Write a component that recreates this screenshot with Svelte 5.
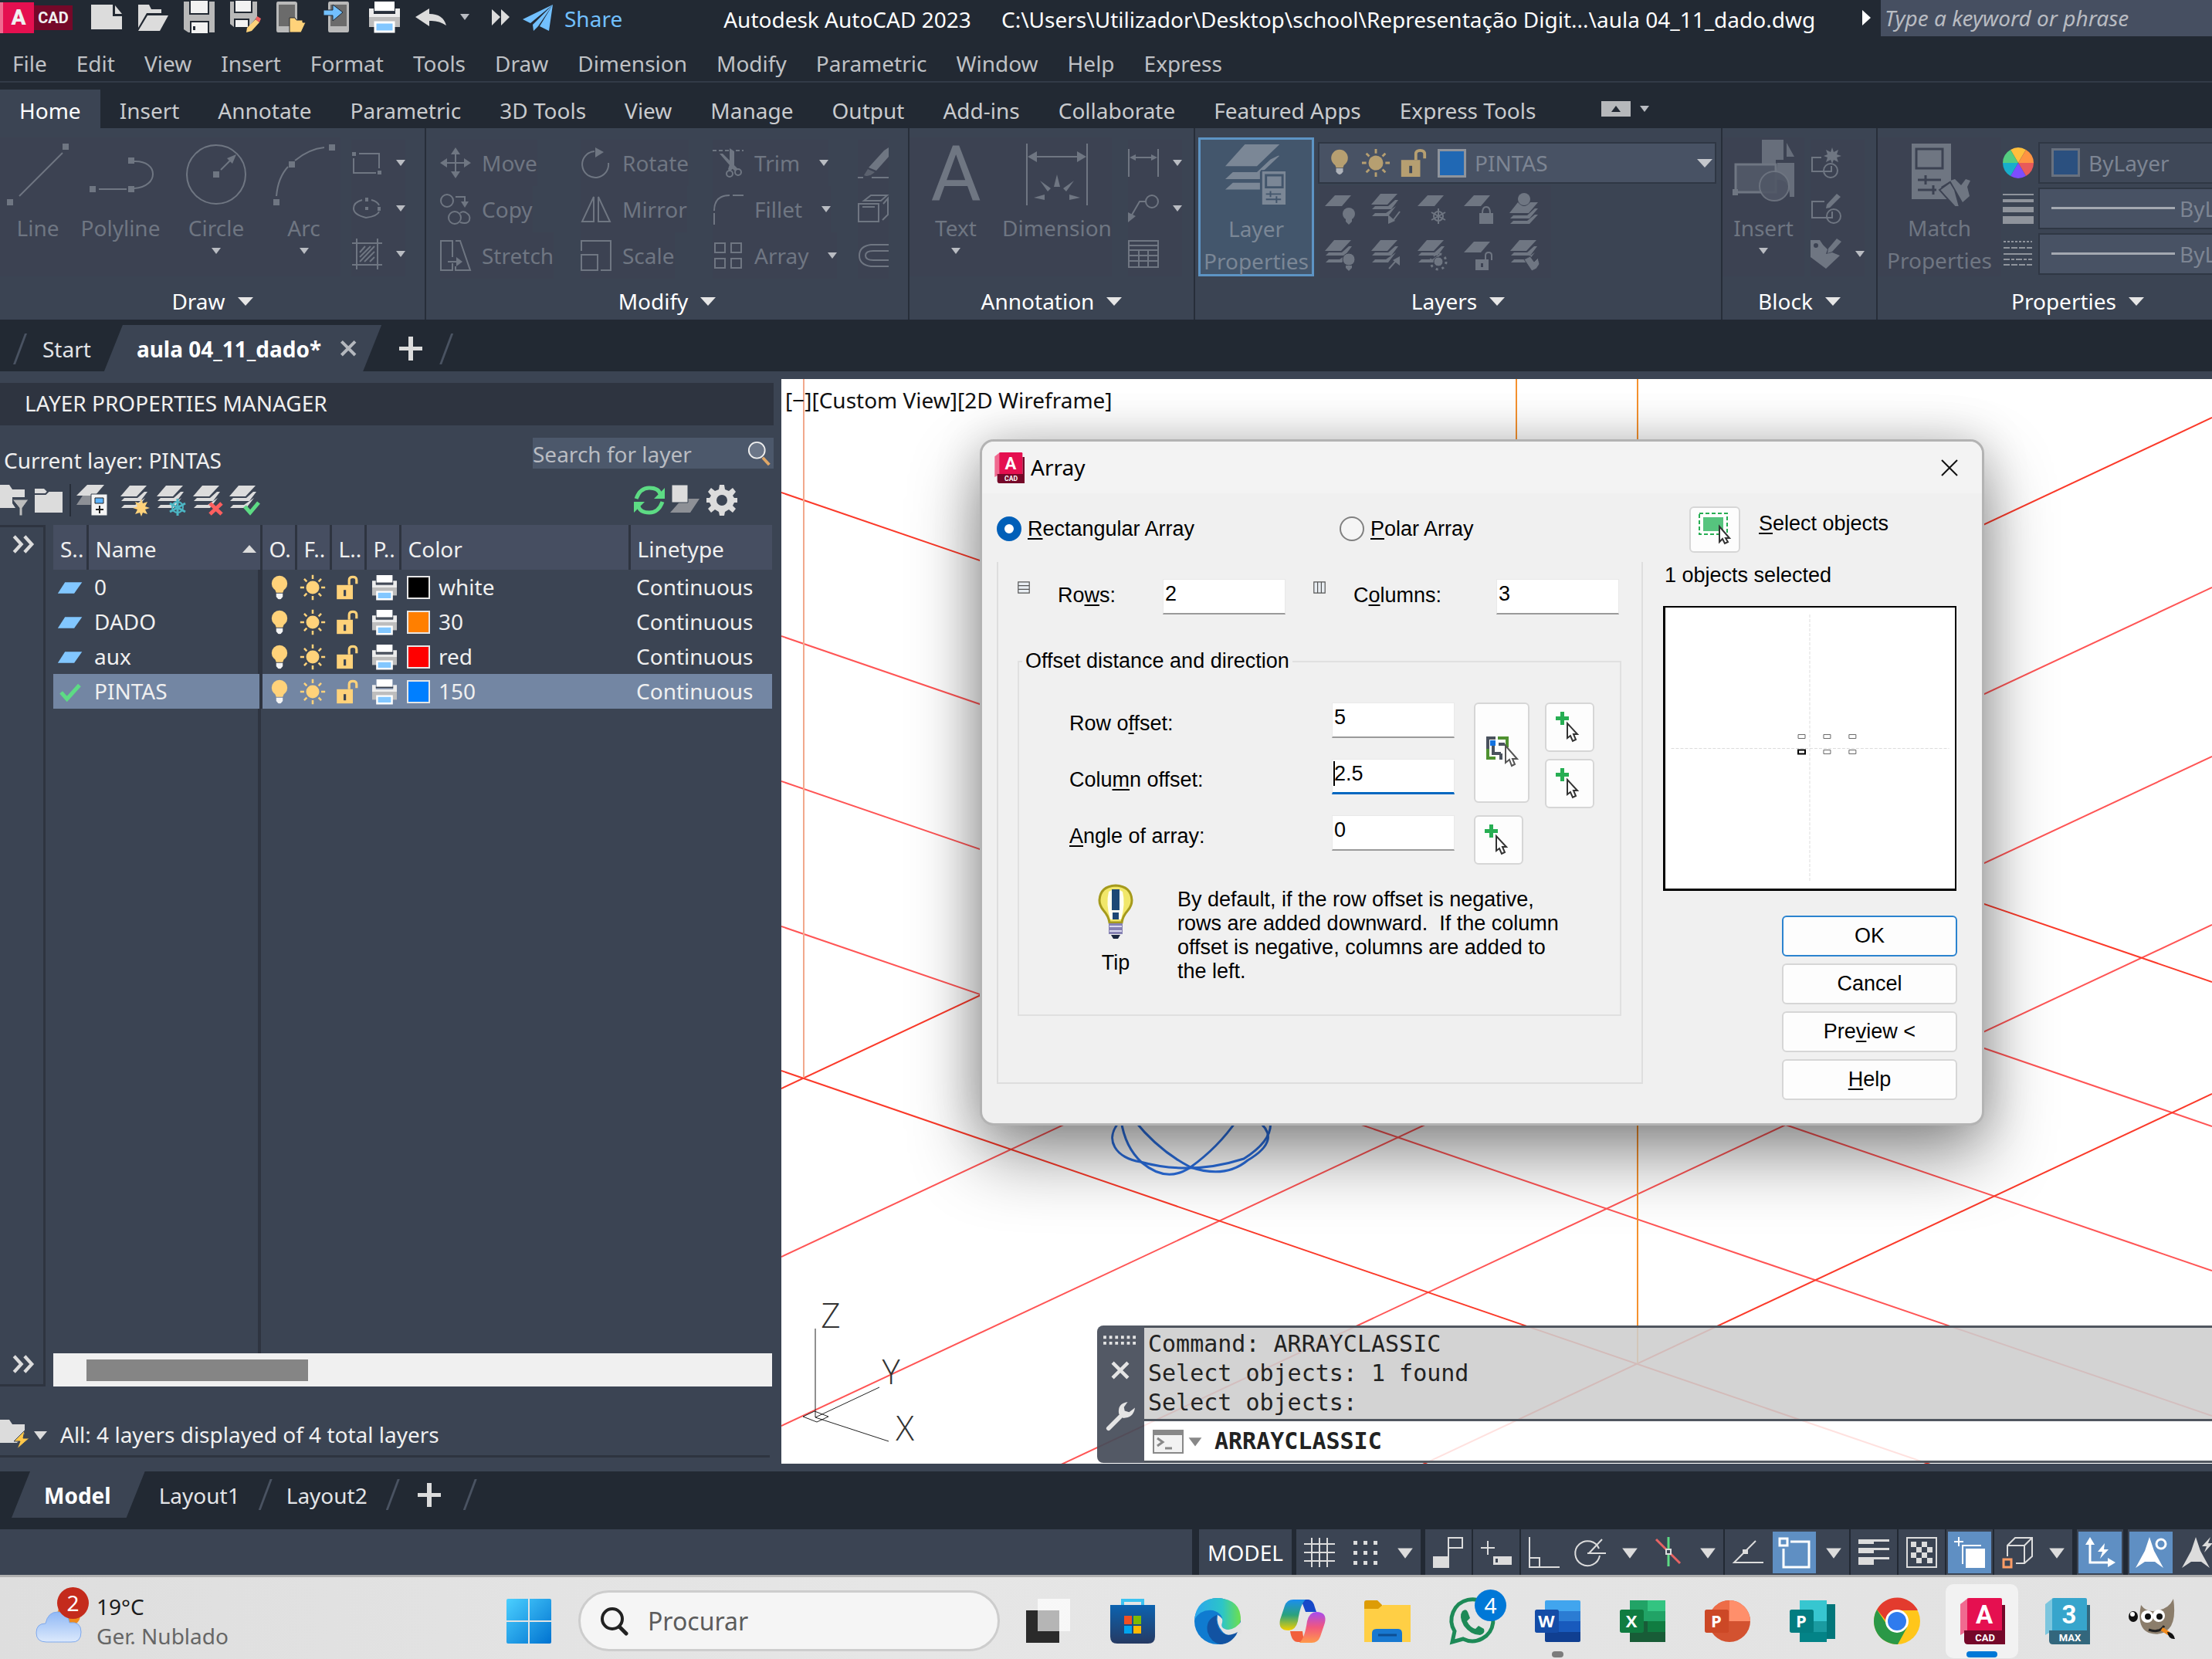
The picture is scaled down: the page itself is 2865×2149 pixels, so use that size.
<script lang="ts">
  // shared stroke settings for the line icons
  const S = 'fill="none" stroke="currentColor" stroke-width="2"';
  const smallStack =
    '<path fill="currentColor" d="M14 1H36L23 15H2zM33 9H37L28 21H3L7 17H24zM34 17L24 30H3L7 26H21z"/>';
  const sheet = '<path fill="currentColor" d="M15 3H36L24 17H2z"/>';

  const icons: Record<string, string> = {
    // quick access
    newFile: '<path fill="#dcdcdc" d="M0 4H28V19H40V36H0z"/><path fill="#dcdcdc" d="M31 5L40 16H31z"/>',
    open: '<path fill="#dcdcdc" d="M1 4H15L18 10H31V15H12L1 34z"/><path fill="#dcdcdc" d="M13 18H40L29 38H1z"/>',
    save: '<path fill="#b9b9b9" d="M0 0H40V40H6L0 36z"/><path fill="#f2f2f2" stroke="#222933" stroke-width="2" d="M8 -2H32V16H8zM9 26H32V42H9z"/><path fill="#222933" d="M12 32H15V37H12z"/>',
    saveAs: '<path fill="#b9b9b9" d="M0 0H35V20L24 33H5L0 29z"/><path fill="#f2f2f2" stroke="#222933" stroke-width="2" d="M6 -2H28V14H6zM6 23H24V34H6z"/><path fill="#ffd27a" d="M33 23L38 27L28 38L21 40L22 34z"/><path fill="#f26161" d="M35 19L40 22L38 27L33 23z"/>',
    openWeb: '<path fill="#b9b9b9" d="M2 0H24Q27 0 27 3V37Q27 40 24 40H2Q0 40 0 37V3Q0 0 2 0z"/><path fill="#6b6b6b" d="M3 4H24V32H3z"/><path fill="#ffd27a" stroke="#222933" d="M17 21H24L26 24H34V27H38L32 40H17z"/>',
    saveWeb: '<path fill="#b9b9b9" d="M9 0H32Q34 0 34 3V37Q34 40 32 40H9Q7 40 7 37V3Q7 0 9 0z"/><path fill="#6b6b6b" d="M10 4H31V32H10z"/><path fill="#72c0ff" stroke="#222933" d="M1 11H13V4L26 14L13 25V18H1z"/>',
    print: '<path fill="#fff" d="M7 0H33V14H7z"/><path fill="#ececec" d="M0 9H6V16H34V9H40V20H0z"/><path fill="#bdbdbd" d="M0 20H40V33H0z"/><path fill="#82c7ff" stroke="#fff" stroke-width="3" d="M8 27H32V39H8z"/><path stroke="#333b48" stroke-width="2" d="M6 13H34"/>',
    undo: '<path fill="#dcdcdc" d="M0 20L18 9V16Q36 16 40 31Q30 24 18 25V32z"/>',
    more: '<path fill="#dcdcdc" d="M0 10L11 20L0 31zM12 10L23 20L12 31z"/>',
    share: '<path fill="#72c0ff" d="M39 2L0 21L10 26zM39 2L13 28L14 36L20 30zM39 2L22 30L34 36z"/>',

    // draw panel
    line: `<path ${S} d="M16 68L72 12"/><path fill="currentColor" d="M0 72H8V80H0zM72 0H80V8H72z"/>`,
    polyline: `<path ${S} d="M12 59H48M58 58C90 56 90 22 58 23"/><path fill="currentColor" d="M0 55H8V63H0zM50 55H58V63H50zM50 18H58V26H50z"/>`,
    circle: `<circle cx="40" cy="40" r="38" ${S}/><path ${S} d="M46 34L60 20"/><path fill="currentColor" d="M66 14L54 19L61 26zM36 36H44V44H36z"/>`,
    arc: `<path ${S} d="M4 68Q6 44 19 30M28 22Q46 7 66 5"/><path fill="currentColor" d="M0 72H8V80H0zM20 23H28V31H20zM72 1H80V9H72z"/>`,
    rect: `<path ${S} d="M3 14V33H32M10 8H36V27"/><path fill="currentColor" d="M1 6H6V11H1zM34 30H39V35H34z"/>`,
    ellipse: `<path ${S} d="M14 9Q3 12 3 20T19 32Q34 30 36 24M26 9Q34 11 36 16"/><path fill="currentColor" d="M18 6H22V11H18zM18 18H22V22H18zM34 18H38V23H34z"/>`,
    hatch: `<path ${S} d="M7 0V40M34 0V40M1 6H40M1 34H40"/><path ${S} d="M11 18L18 10M11 24L25 10M11 30L30 10M17 30L30 17M24 30L30 24"/>`,

    // modify panel
    move: `<path ${S} d="M20 6V34M6 20H34"/><path fill="currentColor" d="M20 0L26 9H14zM20 40L26 31H14zM0 20L9 14V26zM40 20L31 14V26z"/>`,
    rotate: `<path ${S} d="M18 5A17 17 0 1 0 36 20"/><path fill="currentColor" d="M19 0L30 6L19 13z"/>`,
    trim: `<path ${S} stroke-dasharray="5 3" d="M0 4H22M30 4H40"/><path fill="currentColor" d="M22 1L28 5V26L22 31L20 28L22 22zM9 8L13 8L33 28L28 30z"/><circle cx="22" cy="34" r="4" ${S}/><circle cx="33" cy="32" r="4" ${S}/>`,
    erase: '<path fill="currentColor" d="M34 4L40 0V12L24 30L14 26z"/><path fill="currentColor" opacity=".6" d="M13 28L22 32Q14 39 8 36z"/><path fill="currentColor" d="M0 38H7V40H0zM18 38H40V40H18z"/>',
    copy: `<circle cx="9" cy="9" r="8" ${S}/><circle cx="19" cy="31" r="8" ${S}/><path ${S} d="M20 4H32V12M26 25Q29 22 33 24Q40 28 38 34T26 37"/><path fill="currentColor" d="M27 10H37L32 18z"/>`,
    mirror: `<path ${S} d="M17 4V36H2zM23 4V36H38z"/>`,
    fillet: `<path ${S} d="M2 40V25M2 22Q2 2 22 2M26 2H40"/>`,
    explode: `<path ${S} d="M1 13V36H27V13zM6 17H22M8 9L17 2H38L30 9zM33 13L39 6V27L32 34"/>`,
    stretch: `<path ${S} d="M16 30V39H1V1H16V22M20 1H26L39 39H20V34M10 28H24"/><path fill="currentColor" d="M21 22L29 28L21 34z"/>`,
    scale: `<path ${S} d="M1 14V1H39V39H26M1 19H22V39H1z"/>`,
    array: `<path ${S} d="M3 4H16V16H3zM24 4H37V16H24zM3 24H16V36H3zM24 24H37V36H24z"/>`,
    offset: `<path ${S} d="M40 6H17Q2 8 2 20T17 34H40M40 14H20Q10 14 10 20T20 26H40"/>`,

    // annotation panel
    dimension: `<path ${S} d="M1 0V80M79 0V80M10 17H70"/><path fill="currentColor" d="M2 17L14 10V24zM78 17L66 10V24zM36 56L40 40L44 56zM18 48L32 58L28 62zM62 48L48 58L52 62zM10 70L24 66V73zM70 70L56 66V73z"/>`,
    linear: `<path ${S} d="M1 2V38M39 2V38M6 13H34"/><path fill="currentColor" d="M2 13L10 9V17zM38 13L30 9V17z"/>`,
    leader: `<circle cx="31" cy="11" r="8" ${S}/><path ${S} d="M23 11H15L4 30"/><path fill="currentColor" d="M0 38V25L10 30z"/>`,
    table: `<path ${S} d="M1 3H39V37H1zM1 9H39M1 15H39M1 22H39M1 29H39M14 15V37M26 15V37"/>`,

    // layers panel
    layerProps: '<path fill="currentColor" d="M26 0H72L42 29H0zM70 15H72L50 36H46V46H0L10 37H42L60 20zM0 60L10 51H46V60z"/><path fill="currentColor" stroke="#43566c" stroke-width="2" d="M48 35H81V81H48z"/><path fill="none" stroke="#43566c" stroke-width="3" d="M54 41H76V57H54z"/><path fill="none" stroke="#43566c" stroke-width="2" d="M54 66H74M54 73H74M60 62V70M68 69V78"/>',
    bulb: '<circle cx="20" cy="14" r="12" fill="#ffd27a"/><path fill="#ffd27a" d="M12 20H28L25 28H15z"/><path fill="#f4f4f4" d="M15 29H25V34Q20 42 15 34z"/>',
    sun: '<circle cx="20" cy="20" r="10" fill="#ffd27a"/><path stroke="#ffd27a" stroke-width="3" d="M20 1V7M20 33V39M1 20H7M33 20H39M7 7L11 11M29 29L33 33M7 33L11 29M29 11L33 7"/>',
    lock: '<path fill="#ffd27a" d="M4 16H30V39H4z"/><path fill="none" stroke="#ffd27a" stroke-width="4" d="M24 16V8Q24 3 30 3T36 8V14"/><path fill="#3b4453" d="M15 24H19V34H15z"/>',
    layOff: sheet + '<circle cx="33" cy="27" r="8" fill="currentColor"/><path fill="currentColor" d="M29 33H37V37L33 41L29 37z"/>',
    layIso: smallStack + `<path ${S} d="M39 24L30 36"/><path fill="currentColor" d="M24 40V28L33 36z"/>`,
    layFreeze: sheet + `<path ${S} d="M29 20V40M20 25L38 35M20 35L38 25"/><circle cx="29" cy="30" r="6" ${S}/>`,
    layLock: sheet + `<path fill="currentColor" d="M22 26H40V40H22z"/><path ${S} d="M26 26Q26 18 31 18T36 26"/>`,
    layCurrent: '<path fill="currentColor" d="M12 12Q20 22 28 12H38L26 26H1zM34 20H38L27 33H2L6 29H24zM34 28H38L27 40H2L6 36H24z"/><circle cx="20" cy="8" r="8" fill="currentColor"/>',
    layOn: smallStack + '<circle cx="33" cy="26" r="8" fill="currentColor" stroke="#3c4252"/><path fill="currentColor" d="M29 34H37V37L33 41L29 37z"/>',
    layUniso: smallStack + `<path ${S} d="M25 38L34 28"/><path fill="currentColor" d="M39 22V34L30 27z"/>`,
    layThaw: smallStack + '<circle cx="29" cy="29" r="6" fill="currentColor" stroke="#3c4252"/><circle cx="29" cy="29" r="10" fill="none" stroke="currentColor" stroke-width="3" stroke-dasharray="3 5"/>',
    layUnlock: sheet + `<path fill="currentColor" d="M17 26H34V40H17z"/><path ${S} d="M30 26V21Q30 17 34 17T38 21V27"/><path fill="#3c4252" d="M24 31H27V36H24z"/>`,
    layMatch: smallStack + '<path fill="currentColor" stroke="#3c4252" d="M20 26L28 22L33 29L38 24L40 32L36 38L30 41z"/>',

    // block and properties
    insert: '<g transform="translate(0 -5)"><path fill="currentColor" d="M38 0H66V26H56V46H38zM70 4L80 22H70zM58 30H80V74H74Q74 50 56 52z" opacity=".85"/><path fill="#505766" stroke="currentColor" stroke-width="3" d="M4 32H56V68H4z"/><circle cx="54" cy="60" r="19" fill="#505766" opacity=".9" stroke="currentColor" stroke-width="2"/><path fill="currentColor" d="M0 64H7V72H0z"/></g>',
    blockNew: `<path ${S} d="M14 13H2V31H27V24"/><circle cx="26" cy="30" r="9" ${S}/><path fill="currentColor" d="M28 0L30 6L36 3L34 9L40 11L34 13L36 19L30 16L28 21L26 16L20 19L22 13L17 11L22 9L20 3L26 6z"/>`,
    blockEdit: `<path ${S} d="M18 11H2V32H28V24"/><circle cx="30" cy="30" r="9" ${S}/><path fill="currentColor" d="M34 1L39 5L25 19L20 20L21 15z"/>`,
    attrEdit: '<path fill="currentColor" d="M0 2H12L16 8L22 14L20 20L28 18L38 22L20 39L0 24z"/><circle cx="7" cy="9" r="3" fill="#3c4252"/><path fill="currentColor" d="M34 0L40 4L28 17L22 19L23 13z"/>',
    match: '<path fill="currentColor" d="M4 0H55V48L42 56L54 72H4z"/><path fill="none" stroke="#3c4252" stroke-width="3" d="M10 7H44V32H10z"/><path stroke="#3c4252" stroke-width="3" d="M12 47H42M12 60H36M22 41V53M32 54V66"/><path fill="currentColor" stroke="#3c4252" stroke-width="2" d="M40 60L54 50L60 60L66 82L60 82z"/><path fill="currentColor" d="M54 48L60 46L68 54L74 46L80 48L76 56L79 68L70 76z"/>',
    wheel: '<path fill="#ffbf3c" d="M20 20L10 3A20 20 0 0 1 30 3z"/><path fill="#ff9442" d="M20 20L30 3A20 20 0 0 1 40 20z"/><path fill="#e85a5a" d="M20 20H40A20 20 0 0 1 30 37z"/><path fill="#7d4dff" d="M20 20L30 37A20 20 0 0 1 10 37z"/><path fill="#18aecb" d="M20 20L10 37A20 20 0 0 1 0 20z"/><path fill="#54cd80" d="M20 20H0A20 20 0 0 1 10 3z"/>',
    weights: '<path fill="#8f949c" d="M0 1H40V3H0zM0 8H40V12H0zM0 18H40V25H0zM0 30H40V40H0z"/>',
    types: '<path stroke="#8f949c" stroke-width="2" stroke-dasharray="3 2" d="M1 4H38"/><path stroke="#8f949c" stroke-width="2" stroke-dasharray="8 2" d="M1 12H38M1 34H38"/><path stroke="#8f949c" stroke-width="2" d="M1 20H38"/><path stroke="#8f949c" stroke-width="2" stroke-dasharray="8 2 4 2" d="M1 27H38"/>',

    // layer palette
    folderFilter: '<path fill="#dcdcdc" d="M0 0H12L16 6H32V16H16V24L20 30H0z"/><path fill="#bdbdbd" stroke="#3b4453" d="M16 19H37L29 30V40H25V30z"/>',
    folder: '<path fill="#dcdcdc" d="M0 5H12L16 9H36V36H0z"/><path fill="none" stroke="#3b4453" stroke-width="2" d="M0 12H14L18 8"/>',
    layerNew: '<path fill="#8d9096" d="M8 14H20V26H0z"/><path fill="#dcdcdc" d="M14 0H36L24 14H0z"/><path fill="#f4f4f4" stroke="#3b4453" d="M19 12H40V40H19z"/><path fill="#5db4ff" stroke="#222" d="M24 17H35V24H24z"/><path stroke="#222" stroke-width="2" d="M25 32H35M30 27V37"/>',
    layerSun: smallStack + '<path fill="#ffd27a" d="M29 18L31 24L37 22L34 28L40 30L34 32L37 38L31 36L29 41L27 36L21 38L24 32L18 30L24 28L21 22L27 24z"/>',
    layerFreeze: smallStack + '<path fill="none" stroke="#4cb6c4" stroke-width="3" d="M29 18V40M19 24L39 35M19 35L39 24"/><circle cx="29" cy="29" r="7" fill="none" stroke="#4cb6c4" stroke-width="2"/>',
    layerDelete: smallStack + '<path stroke="#ff5f5f" stroke-width="5" d="M24 24L39 38M39 24L24 38"/>',
    layerCheck: smallStack + '<path fill="none" stroke="#5ddb84" stroke-width="5" d="M22 28L29 36L40 23"/>',
    refresh: '<path fill="none" stroke="#5ddb84" stroke-width="5" d="M3 18Q8 4 20 4T34 12M37 22Q32 36 20 36T6 28"/><path fill="#5ddb84" d="M40 4V18H26zM0 36V22H14z"/>',
    layerState: '<path fill="#8d9096" d="M16 18H38L26 36H0z"/><path fill="#dcdcdc" stroke="#3b4453" d="M2 0H23V23H2z"/>',
    gear: '<path fill="#dcdcdc" fill-rule="evenodd" d="M17 0H23L24 6L29 8L34 4L38 9L34 14L36 17H40V23H36L34 27L38 31L34 36L29 32L24 35L23 40H17L16 35L11 32L6 36L2 31L6 27L4 23H0V17H4L6 14L2 9L6 4L11 8L16 6zM20 13A7 7 0 1 0 20 27A7 7 0 1 0 20 13z"/>',
    para: '<path fill="#82c7ff" d="M12 12H38L26 29H1z"/>',
    tick: '<path fill="none" stroke="#5ddb84" stroke-width="6" d="M6 21L15 31L34 10"/>',
    chevrons: '<path fill="none" stroke="#dcdcdc" stroke-width="5" d="M5 8L16 20L5 32M21 8L32 20L21 32"/>',
    folderFlash: '<path fill="#dcdcdc" d="M0 0H12L16 6H32V18L22 30H0z"/><path fill="#ffc74a" stroke="#3b4453" d="M32 14L18 28H26L22 38L38 24H30z"/>',
    search: '<circle cx="13" cy="14" r="11" fill="#6b7688" stroke="#eee" stroke-width="2"/><path stroke="#e0a766" stroke-width="4" d="M21 24L30 34"/>',
    plus: '<path fill="#dcdcdc" d="M17 4H23V17H35V22H23V35H17V22H5V17H17z"/>',
    cross: '<path stroke="#b4b8be" stroke-width="5" d="M8 8L30 30M30 8L8 30"/>',

    // status bar
    gridOn: `<path ${S} d="M10 1V39M20 1V39M30 1V39M0 9H40M0 20H40M0 31H40"/>`,
    snap: '<path fill="currentColor" d="M4 5H9V10H4zM17 5H22V10H17zM30 5H35V10H30zM4 18H9V23H4zM17 18H22V23H17zM30 18H35V23H30zM4 31H9V36H4zM17 31H22V36H17zM30 31H35V36H30z"/>',
    infer: `<path fill="currentColor" d="M0 25H21V40H0z"/><path ${S} d="M20 26V1H38V14H20"/>`,
    dynInput: `<path ${S} d="M9 5V23M0 14H18"/><path fill="currentColor" d="M16 25H40V36H16z"/><path fill="#3b4453" d="M19 28H22V33H19z"/>`,
    ortho: `<path ${S} d="M1 0V39H40M1 27H14V39"/>`,
    polar: `<path ${S} d="M31 15A16 16 0 1 0 32 24M16 21H40M18 21L35 3"/>`,
    isodraft: '<path stroke="#5ddb84" stroke-width="3" d="M20 0V38"/><path stroke="#e86464" stroke-width="3" d="M4 3L35 34"/><path fill="#3b4453" stroke="#dcdcdc" stroke-width="2" d="M17 16H23V22H17z"/>',
    otrack: `<path ${S} d="M30 5L2 33H40"/><path fill="currentColor" d="M13 16H20V22H13z"/>`,
    osnap: '<path fill="none" stroke="currentColor" stroke-width="3" d="M1 2H11V11H1zM15 6H39V39H6V15"/>',
    weight: '<path fill="currentColor" d="M0 3H40V6H20V9H0zM0 14H40V17H20V21H0zM0 26H40V29H20V36H0z"/>',
    transp: `<path ${S} d="M1 1H39V39H1z"/><path fill="currentColor" d="M6 6H13V13H6zM20 6H27V13H20zM13 13H20V20H13zM27 13H34V20H27zM6 20H13V27H6zM20 20H27V27H20zM13 27H20V34H13zM27 27H34V34H27z"/>`,
    cycle: '<path fill="#fff" d="M15 15H40V40H15z"/><path fill="none" stroke="#fff" stroke-width="2" d="M11 35V11H35M6 0V12M0 6H12"/>',
    snap3d: `<path ${S} d="M7 25V11L17 1H39V25L29 34H18M7 11H29V34M29 11L39 1"/><path fill="none" stroke="#ff9d66" stroke-width="3" d="M2 29H12V39H2z"/>`,
    ucs: '<path fill="none" stroke="#fff" stroke-width="3" d="M7 8V33H33"/><path fill="#fff" d="M7 0L13 10H1zM40 33L30 27V39zM26 8L17 19H23L20 28L31 16H25z"/>',
    anno: '<path fill="currentColor" d="M18 0L24 18L36 40L25 32H12L0 40L12 18z"/><circle cx="33" cy="9" r="6" fill="none" stroke="currentColor" stroke-width="3"/>',
    annoAuto: '<path fill="currentColor" d="M18 0L24 18L36 40L25 32H12L0 40L12 18zM37 0L26 12H32L29 20L40 8H34z"/>',

    // dialog
    pick: '<path fill="#27ae53" d="M8 0H13V6H19V11H13V17H8V11H2V6H8z"/><path fill="#fff" stroke="#333" stroke-width="2" d="M17 15V34L21 31L24 38L28 36L25 29H30z"/>',
    pickBoth: '<path fill="none" stroke="#4a525e" stroke-width="4" d="M3 16V2H13M10 10V22H20"/><path fill="none" stroke="#4f9130" stroke-width="4" d="M16 2H28V14M3 16V28H13"/><path fill="#1372e0" d="M6 5H13V12H6z"/><path fill="#4a525e" d="M17 8H25V12H17zM18 22H22V30H18z"/><path fill="#fff" stroke="#555" stroke-width="2" d="M26 12V34L31 30L34 38L38 36L35 29H41z"/>',
    selectObj: '<path fill="#56c47e" d="M6 6H32V24H6z"/><path fill="none" stroke="#27ae53" stroke-width="2" stroke-dasharray="5 3" d="M1 1H37V28H1z"/><path fill="#fff" stroke="#333" stroke-width="2" d="M27 18V38L31 34L34 40L38 38L35 33H40z"/>',
    close: '<path stroke="#111" stroke-width="2" d="M10 10L30 30M30 10L10 30"/>',
    rows: '<path fill="#e9eef3" stroke="#555" stroke-width="3" d="M2 2H38V38H2zM2 14H38M2 26H38"/>',
    cols: '<path fill="#e9eef3" stroke="#555" stroke-width="3" d="M2 2H38V38H2zM14 2V38M26 2V38"/>',
    wrench: '<path fill="none" stroke="#e4e4e4" stroke-width="6" stroke-linecap="round" d="M4 36L24 16"/><path fill="#e4e4e4" d="M30 0Q16 2 18 16L24 22Q38 22 40 8L32 14L26 12L25 7z"/>',
    cmdClose: '<path stroke="#e4e4e4" stroke-width="5" d="M9 9L31 31M31 9L9 31"/>',
    grip: '<path fill="none" stroke="#e4e4e4" stroke-width="4" stroke-dasharray="4 4" d="M-2 16H44M-2 24H44"/>',
    prompt: '<path fill="#f2f2f2" stroke="#888" stroke-width="2" d="M1 6H39V35H1z"/><path fill="#888" d="M0 5H40V12H0z"/><path fill="none" stroke="#888" stroke-width="3" d="M6 16L13 21L6 26M16 29H25"/>',
    caret: '<path fill="currentColor" d="M6 12H34L20 31z"/>',

    // taskbar, 60 unit box
    windows: '<defs><linearGradient id="win" x2="1" y2="1"><stop stop-color="#4bd0ff"/><stop offset="1" stop-color="#0072d0"/></linearGradient></defs><path fill="url(#win)" d="M1 3Q1 1 3 1H29V29H1zM31 1H57Q59 1 59 3V29H31zM1 31H29V59H3Q1 59 1 57zM31 31H59V57Q59 59 57 59H31z"/>',
    weather: '<defs><linearGradient id="cl" x2="0" y2="1"><stop stop-color="#8fb8f5"/><stop offset="1" stop-color="#dce9fc"/></linearGradient></defs><circle cx="43" cy="22" r="15" fill="#f08b1d"/><path fill="url(#cl)" stroke="#7fa9ec" d="M14 57Q1 57 1 45T13 33Q16 18 29 18T44 32Q59 30 59 44T46 57z"/>',
    taskview: '<path fill="#2a2a2a" d="M2 16H45V58H2z"/><path fill="#fafafa" opacity=".85" d="M17 1H59V43H17z"/><path fill="#b5b5b5" d="M17 16H45V43H17z"/>',
    store: '<defs><linearGradient id="st" x2="0" y2="1"><stop stop-color="#0c63b0"/><stop offset="1" stop-color="#263a63"/></linearGradient></defs><path fill="none" stroke="#3cc3f2" stroke-width="4" d="M17 13V3H43V13"/><path fill="url(#st)" d="M1 9H59V50Q59 59 50 59H10Q1 59 1 50z"/><path fill="#f25022" d="M19 23H29V34H19z"/><path fill="#7fba00" d="M31 23H41V34H31z"/><path fill="#00a4ef" d="M19 36H29V46H19z"/><path fill="#ffb900" d="M31 36H41V46H31z"/>',
    edge: '<defs><linearGradient id="ed" x2="1"><stop stop-color="#2aa5ee"/><stop offset=".6" stop-color="#2cc5c8"/><stop offset="1" stop-color="#6ee04c"/></linearGradient></defs><circle cx="30" cy="30" r="30" fill="#0f7bd0"/><path fill="url(#ed)" d="M0 28Q3 0 31 0Q60 2 60 28Q58 41 44 41Q33 40 36 32Q38 20 24 16Q8 14 0 28z"/><path fill="#e3e3e3" d="M30 22Q38 26 36 32Q33 40 44 41Q54 40 61 30L61 46L54 47Q42 51 36 43Q28 34 30 22z"/><path fill="#1253a2" d="M29 22Q14 28 17 44Q21 57 33 60Q48 60 56 44Q42 52 34 43Q27 34 29 22z"/>',
    copilot: '<defs><linearGradient id="co" x2="0" y2="1"><stop stop-color="#1b8ef0"/><stop offset=".5" stop-color="#2aa27d"/><stop offset="1" stop-color="#f5d000"/></linearGradient><linearGradient id="cp" x2="0" y2="1"><stop stop-color="#a54cf0"/><stop offset=".5" stop-color="#f2577d"/><stop offset="1" stop-color="#ff9a4a"/></linearGradient></defs><path fill="#1648c8" d="M28 2H38Q44 3 46 12L48 18H34z"/><path fill="url(#co)" d="M18 2H34Q27 8 24 30Q21 42 12 42Q-2 42 1 28L7 10Q10 2 18 2z"/><path fill="#f2603c" d="M14 43H30L32 57H24Q16 57 14 43z"/><path fill="url(#cp)" d="M42 58H26Q33 52 36 30Q39 18 48 18Q62 18 59 32L53 50Q50 58 42 58z"/>',
    explorer: '<path fill="#dd9c06" d="M0 6Q0 3 3 3H17L23 9V16H0z"/><path fill="#ffcf45" d="M0 14H18L24 9H60V57H0z"/><path fill="#1878d0" d="M10 57V46Q10 40 16 40H44Q49 40 49 46V57z"/><path stroke="#0d4f94" stroke-width="3" d="M18 48H42"/>',
    whatsapp: '<path fill="none" stroke="#1d8a57" stroke-width="5" d="M4 57L7 43A27 27 0 1 1 18 53z"/><path fill="#1d8a57" d="M17 17Q22 13 24 18L27 26L23 30Q27 38 34 40L38 36L45 40Q47 46 40 48Q28 48 19 36Q12 24 17 17z"/>',
    chrome: '<circle cx="30" cy="30" r="30" fill="#ffc61a"/><path fill="#e33b2e" d="M4 15A30 30 0 0 1 57 16H30L18 32z"/><path fill="#2a9847" d="M4 15A30 30 0 0 0 31 60L43 38L18 36z"/><circle cx="30" cy="30" r="15" fill="#fff"/><circle cx="30" cy="30" r="12" fill="#2f7bee"/>',
    gimp: '<path fill="#8b7d6b" d="M16 9Q24 20 38 16Q52 14 58 1Q62 30 52 40Q42 50 26 45Q10 38 16 9z"/><ellipse cx="6" cy="24" rx="6" ry="7" fill="#111"/><circle cx="5" cy="21" r="3" fill="#fff"/><circle cx="24" cy="24" r="8" fill="#fff"/><circle cx="39" cy="23" r="8" fill="#fff"/><circle cx="25" cy="24" r="4" fill="#111"/><circle cx="40" cy="24" r="4" fill="#111"/><path fill="none" stroke="#222" stroke-width="3" d="M26 41Q40 46 46 36"/><path stroke="#f08a1d" stroke-width="5" d="M43 40L52 46"/><path fill="#111" d="M50 44Q58 44 60 53Q52 54 50 44z"/>'
  };

  const quick = ['newFile', 'open', 'save', 'saveAs', 'openWeb', 'saveWeb', 'print', 'undo'];
  const menus = ['File', 'Edit', 'View', 'Insert', 'Format', 'Tools', 'Draw', 'Dimension', 'Modify', 'Parametric', 'Window', 'Help', 'Express'];
  const ribbonTabs = ['Home', 'Insert', 'Annotate', 'Parametric', '3D Tools', 'View', 'Manage', 'Output', 'Add-ins', 'Collaborate', 'Featured Apps', 'Express Tools'];

  const modify = [
    [['move', 'Move'], ['copy', 'Copy'], ['stretch', 'Stretch']],
    [['rotate', 'Rotate'], ['mirror', 'Mirror'], ['scale', 'Scale']],
    [['trim', 'Trim', 'more'], ['fillet', 'Fillet', 'more'], ['array', 'Array', 'more']],
    [['erase', ''], ['explode', ''], ['offset', '']]
  ];

  const layerTools = [
    ['layOff', 'layIso', 'layFreeze', 'layLock', 'layCurrent'],
    ['layOn', 'layUniso', 'layThaw', 'layUnlock', 'layMatch']
  ];

  const layers = [
    { name: '0', swatch: '#000000', color: 'white' },
    { name: 'DADO', swatch: '#ff7f00', color: '30' },
    { name: 'aux', swatch: '#ff0000', color: 'red' },
    { name: 'PINTAS', swatch: '#007fff', color: '150' }
  ];

  // construction lines: x1, y1, x2, y2
  const guides = [
    [0, 333, 1853, 968], [0, 521, 1853, 1155], [0, 709, 1853, 1343],
    [0, 1137, 1853, 270], [0, 1356, 1853, 489], [0, 1576, 1853, 707]
  ];
  const edges = [
    [0, 147, 1853, 781], [0, 896, 1853, 1531], [0, 919, 1853, 50], [0, 1796, 1853, 926]
  ];

  const office = [
    { letter: 'W', name: 'Word', tones: ['#41a5ee', '#2b7cd3', '#185abd', '#103f91'], running: true },
    { letter: 'X', name: 'Excel', tones: ['#33c481', '#21a366', '#107c41', '#185c37'], running: false },
    { letter: 'P', name: 'PowerPoint', tones: ['#ff8f6b', '#ed6c47', '#d35230', '#c43e1c'], running: false },
    { letter: 'P', name: 'Publisher', tones: ['#37c6d0', '#1a9ba1', '#038387', '#02767a'], running: false }
  ];

  let currentLayer = 'PINTAS';
  let mode = 'rectangular';
  let rows = '2';
  let columns = '3';
  let rowOffset = '5';
  let columnOffset = '2.5';
  let angle = '0';
</script>

{#snippet icon(name: string, size = 40, box = 40)}
  <svg class="icon" width={size} height={size} viewBox="0 0 {box} {box}" aria-hidden="true">{@html icons[name]}</svg>
{/snippet}

{#snippet arrow()}
  <svg class="icon arrow" width="12" height="8" viewBox="0 0 12 8" aria-hidden="true"><path fill="currentColor" d="M0 0H12L6 8z" /></svg>
{/snippet}

{#snippet bigTool(name: string, label: string, more: boolean)}
  <button class="big" type="button">
    {@render icon(name, 80, 80)}
    <span>{label}</span>
    {#if more}{@render arrow()}{/if}
  </button>
{/snippet}

{#snippet smallTool(name: string, label: string, more: boolean)}
  <button class="small" type="button" aria-label={label || name}>
    {@render icon(name)}
    {#if label}<span>{label}</span>{/if}
    {#if more}{@render arrow()}{/if}
  </button>
{/snippet}

{#snippet panelTitle(label: string)}
  <button class="panel-title" type="button">
    {label}
    <svg width="20" height="11" viewBox="0 0 20 11" aria-hidden="true"><path fill="#e6e6e6" d="M0 0H20L10 11z" /></svg>
  </button>
{/snippet}

{#snippet cadLogo(size: number, top: string, side: string, bottom: string, letter: string, word: string)}
  <svg class="icon" width={size} height={size} viewBox="0 0 60 60" aria-hidden="true">
    <path fill={side} d="M2 8L12 0V42L2 48z" />
    <path fill={bottom} d="M56 9H60V60H12Q7 60 7 55V42H56z" />
    <path fill={top} d="M11 2Q11 0 13 0H54Q56 0 56 2V42H11z" />
    <text x="33" y="33" text-anchor="middle" font-family="Roboto, sans-serif" font-weight="700" font-size="33" fill="#fff">{letter}</text>
    <text x="34" y="56" text-anchor="middle" font-family="Roboto, sans-serif" font-weight="700" font-size="13" fill="#fff">{word}</text>
  </svg>
{/snippet}

<div class="screen">
  <header class="titlebar">
    <div class="brand"><b>A</b><span>CAD</span></div>
    <div class="quick">
      {#each quick as name}
        <button type="button" aria-label={name}>{@render icon(name)}</button>
      {/each}
    </div>
    <button class="undo-more" type="button" aria-label="Undo history">{@render arrow()}</button>
    <button class="chevron" type="button" aria-label="More tools">{@render icon('more')}</button>
    <button class="share" type="button">{@render icon('share')} Share</button>
    <h1 class="app-title">Autodesk AutoCAD 2023 <span>C:\Users\Utilizador\Desktop\school\Representação Digit...\aula 04_11_dado.dwg</span></h1>
    <div class="infocenter">
      <svg width="11" height="20" viewBox="0 0 11 20" aria-hidden="true"><path fill="#fff" d="M0 0L11 10L0 20z" /></svg>
      <input type="text" placeholder="Type a keyword or phrase" aria-label="Type a keyword or phrase" />
    </div>
  </header>

  <nav class="menubar">
    {#each menus as item}
      <button type="button">{item}</button>
    {/each}
  </nav>

  <nav class="ribbon-tabs">
    {#each ribbonTabs as tab, i}
      <button type="button" class:active={i === 0}>{tab}</button>
    {/each}
    <button class="minimize" type="button" aria-label="Minimize ribbon">
      <svg width="38" height="20" viewBox="0 0 38 20" aria-hidden="true"><path fill="#b6b8bb" d="M0 0H38V20H0z" /><path fill="#222933" d="M19 6L25 14H13z" /></svg>
      {@render arrow()}
    </button>
  </nav>

  <section class="ribbon">
    <div class="panel draw">
      <div class="tools">
        {@render bigTool('line', 'Line', false)}
        {@render bigTool('polyline', 'Polyline', false)}
        {@render bigTool('circle', 'Circle', true)}
        {@render bigTool('arc', 'Arc', true)}
        <div class="stack">
          {@render smallTool('rect', '', true)}
          {@render smallTool('ellipse', '', true)}
          {@render smallTool('hatch', '', true)}
        </div>
      </div>
      {@render panelTitle('Draw')}
    </div>

    <div class="panel modify">
      <div class="tools">
        {#each modify as column}
          <div class="stack">
            {#each column as [name, label, more]}
              {@render smallTool(name, label, !!more)}
            {/each}
          </div>
        {/each}
      </div>
      {@render panelTitle('Modify')}
    </div>

    <div class="panel annotation">
      <div class="tools">
        <button class="big" type="button">
          <span class="letter-a" aria-hidden="true">A</span>
          <span>Text</span>
          {@render arrow()}
        </button>
        {@render bigTool('dimension', 'Dimension', false)}
        <div class="stack">
          {@render smallTool('linear', '', true)}
          {@render smallTool('leader', '', true)}
          {@render smallTool('table', '', false)}
        </div>
      </div>
      {@render panelTitle('Annotation')}
    </div>

    <div class="panel layers">
      <div class="tools">
        <button class="big selected" type="button">
          {@render icon('layerProps', 80, 82)}
          <span>Layer Properties</span>
        </button>
        <div class="stack wide">
          <div class="combo">
            <span class="states">
              {@render icon('bulb', 36)}
              {@render icon('sun', 38)}
              {@render icon('lock', 38)}
            </span>
            <i class="swatch"></i>
            <select bind:value={currentLayer} aria-label="Current layer">
              {#each layers as layer}<option>{layer.name}</option>{/each}
            </select>
            <svg width="20" height="11" viewBox="0 0 20 11" aria-hidden="true"><path fill="#c4c7cc" d="M0 0H20L10 11z" /></svg>
          </div>
          {#each layerTools as line}
            <div class="line">
              {#each line as name}{@render smallTool(name, '', false)}{/each}
            </div>
          {/each}
        </div>
      </div>
      {@render panelTitle('Layers')}
    </div>

    <div class="panel block">
      <div class="tools">
        {@render bigTool('insert', 'Insert', true)}
        <div class="stack">
          {@render smallTool('blockNew', '', false)}
          {@render smallTool('blockEdit', '', false)}
          {@render smallTool('attrEdit', '', true)}
        </div>
      </div>
      {@render panelTitle('Block')}
    </div>

    <div class="panel properties">
      <div class="tools">
        {@render bigTool('match', 'Match Properties', false)}
        <div class="stack">
          <div class="prop">
            {@render icon('wheel')}
            <div class="combo flat"><i class="swatch dim"></i><select aria-label="Object color"><option>ByLayer</option></select></div>
          </div>
          <div class="prop">
            {@render icon('weights')}
            <div class="combo"><i class="rule"></i><select aria-label="Lineweight"><option>ByLayer</option></select></div>
          </div>
          <div class="prop">
            {@render icon('types')}
            <div class="combo"><i class="rule"></i><select aria-label="Linetype"><option>ByLayer</option></select></div>
          </div>
        </div>
      </div>
      {@render panelTitle('Properties')}
    </div>
  </section>

  <nav class="doc-tabs">
    <i class="slash"></i>
    <button type="button" class="start">Start</button>
    <div class="doc-tab">
      <button type="button">aula 04_11_dado*</button>
      <button type="button" aria-label="Close drawing">{@render icon('cross', 32)}</button>
    </div>
    <button type="button" class="add" aria-label="New drawing">{@render icon('plus')}</button>
    <i class="slash"></i>
  </nav>

  <main class="workspace">
    <aside class="palette">
      <h2>LAYER PROPERTIES MANAGER</h2>
      <div class="palette-head">
        <span>Current layer: PINTAS</span>
        <label class="layer-search">
          <input type="text" placeholder="Search for layer" aria-label="Search for layer" />
          {@render icon('search', 34, 36)}
        </label>
      </div>
      <div class="palette-tools">
        <button type="button" aria-label="New property filter">{@render icon('folderFilter')}</button>
        <button type="button" aria-label="New group filter">{@render icon('folder')}</button>
        <i></i>
        <button type="button" aria-label="Layer states">{@render icon('layerNew')}</button>
        <div class="layer-actions">
          {#each ['layerSun', 'layerFreeze', 'layerDelete', 'layerCheck'] as name}
            <button type="button" aria-label={name}>{@render icon(name)}</button>
          {/each}
        </div>
        <div class="right">
          {#each ['refresh', 'layerState', 'gear'] as name}
            <button type="button" aria-label={name}>{@render icon(name)}</button>
          {/each}
        </div>
      </div>
      <div class="palette-body">
        <div class="rail">
          <button type="button" aria-label="Expand filter tree">{@render icon('chevrons', 34)}</button>
          <button type="button" aria-label="Expand filters">{@render icon('chevrons', 34)}</button>
        </div>
        <div class="list">
          <table>
            <colgroup>
              <col class="c-status" /><col class="c-name" />
              <col class="c-flag" /><col class="c-flag" /><col class="c-flag" /><col class="c-flag" />
              <col class="c-color" /><col />
            </colgroup>
            <thead>
              <tr>
                <th>S..</th>
                <th><span class="sorted">Name <svg width="18" height="10" viewBox="0 0 18 10" aria-hidden="true"><path fill="#dcdcdc" d="M9 0L18 10H0z" /></svg></span></th>
                <th>O.</th><th>F..</th><th>L..</th><th>P..</th>
                <th>Color</th>
                <th>Linetype</th>
              </tr>
            </thead>
            <tbody>
              {#each layers as layer}
                <tr class:current={layer.name === currentLayer}>
                  <td class="mark">{@render icon(layer.name === currentLayer ? 'tick' : 'para', 34)}</td>
                  <td>{layer.name}</td>
                  <td class="mark">{@render icon('bulb', 34)}</td>
                  <td class="mark">{@render icon('sun', 34)}</td>
                  <td class="mark">{@render icon('lock', 32)}</td>
                  <td>{@render icon('print', 32)}</td>
                  <td><span class="color"><i style="background: {layer.swatch}"></i>{layer.color}</span></td>
                  <td>Continuous</td>
                </tr>
              {/each}
            </tbody>
          </table>
          <div class="scroll"><i></i></div>
        </div>
      </div>
      <div class="palette-foot">
        {@render icon('folderFlash')}
        <svg width="17" height="11" viewBox="0 0 17 11" aria-hidden="true"><path fill="#dcdcdc" d="M0 0H17L8 11z" /></svg>
        <span>All: 4 layers displayed of 4 total layers</span>
      </div>
    </aside>

    <section class="drawing">
      <svg class="model" width="1853" height="1405" viewBox="0 0 1853 1405" aria-hidden="true">
        <g stroke="#ff5555" stroke-width="2">
          {#each guides as [x1, y1, x2, y2]}<line {x1} {y1} {x2} {y2} />{/each}
        </g>
        <g stroke="#fb3a2a" stroke-width="2">
          {#each edges as [x1, y1, x2, y2]}<line {x1} {y1} {x2} {y2} />{/each}
        </g>
        <path fill="none" stroke="#f5912e" stroke-width="2" d="M952 0V200M1109 0V1275" />
        <path fill="none" stroke="#f2a98c" stroke-width="2" d="M29 0V905" />
        <g fill="none" stroke="#2b6fe0" stroke-width="3">
          <path d="M440 960C415 985 435 1010 465 1014Q530 1032 599 1010Q638 985 633 960" />
          <path d="M440 960Q445 995 467 1015Q499 1042 530 1021Q566 995 590 960" />
          <path d="M457 960Q489 1000 530 1021Q575 1036 604 1012Q650 985 616 960" />
        </g>
        <path fill="none" stroke="#222" d="M44 1230V1345L127 1306M44 1345L139 1376M28 1344L43 1337L61 1344L46 1351z" />
        <g font-family="'Open Sans', sans-serif" font-weight="300" font-size="44" fill="#333" text-anchor="middle">
          <text x="64" y="1229">Z</text>
          <text x="142" y="1302">Y</text>
          <text x="160" y="1375">X</text>
        </g>
      </svg>
      <div class="view-label">[−][Custom View][2D Wireframe]</div>

      <form class="dialog" on:submit|preventDefault>
        <div class="dialog-title">
          {@render cadLogo(40, '#e51050', '#f06a90', '#750829', 'A', 'CAD')}
          <span>Array</span>
          <button type="button" aria-label="Close">{@render icon('close', 40)}</button>
        </div>
        <div class="dialog-body">
          <div class="left">
            <div class="modes">
              <label><input type="radio" name="mode" value="rectangular" bind:group={mode} /><span><u>R</u>ectangular Array</span></label>
              <label><input type="radio" name="mode" value="polar" bind:group={mode} /><span><u>P</u>olar Array</span></label>
            </div>
            <div class="group">
              <div class="counts">
                {@render icon('rows', 16)}
                <label for="rows">Ro<u>w</u>s:</label>
                <input id="rows" type="text" bind:value={rows} />
                {@render icon('cols', 16)}
                <label for="columns">C<u>o</u>lumns:</label>
                <input id="columns" type="text" bind:value={columns} />
              </div>
              <fieldset>
                <legend>Offset distance and direction</legend>
                <div class="offsets">
                  <label for="row-offset">Row o<u>f</u>fset:</label>
                  <input id="row-offset" type="text" bind:value={rowOffset} />
                  <button class="both" type="button" aria-label="Pick both offsets">{@render icon('pickBoth', 42, 42)}</button>
                  <button type="button" aria-label="Pick row offset">{@render icon('pick')}</button>
                  <label for="column-offset">Colu<u>m</u>n offset:</label>
                  <span class="focused"><input id="column-offset" type="text" bind:value={columnOffset} /></span>
                  <button type="button" aria-label="Pick column offset">{@render icon('pick')}</button>
                  <label for="angle"><u>A</u>ngle of array:</label>
                  <input id="angle" type="text" bind:value={angle} />
                  <button type="button" aria-label="Pick angle of array">{@render icon('pick')}</button>
                </div>
                <div class="tip">
                  <div class="tip-mark">
                    <svg width="46" height="72" viewBox="0 0 46 72" aria-hidden="true">
                      <path fill="#f1e76a" stroke="#a59a1c" stroke-width="3" d="M15 50Q14 42 7 34Q2 28 2 21Q3 3 23 2Q43 3 44 21Q44 28 39 34Q32 42 31 50z" />
                      <path fill="#fffef0" d="M16 46Q10 26 14 10Q23 4 32 10Q36 26 30 46z" />
                      <path fill="#1d4875" d="M18 7H28V34H18zM19 37H27V46H19z" />
                      <path fill="#8682b4" d="M14 51H32V65H14z" />
                      <path stroke="#d9d8ee" stroke-width="2" d="M15 55H31M15 61H31" />
                      <path fill="#1b2740" d="M17 66H29L26 71H20z" />
                    </svg>
                    <span>Tip</span>
                  </div>
                  <p>By default, if the row offset is negative, rows are added downward.&nbsp; If the column offset is negative, columns are added to the left.</p>
                </div>
              </fieldset>
            </div>
          </div>
          <div class="side">
            <div class="select">
              <button type="button" id="select-objects" aria-label="Select objects">{@render icon('selectObj', 42, 42)}</button>
              <label for="select-objects"><u>S</u>elect objects</label>
            </div>
            <p>1 objects selected</p>
            <svg class="preview" viewBox="0 0 375 365" aria-hidden="true">
              <path fill="none" stroke="#dcdcdc" stroke-dasharray="4 2" d="M187 9V357M7 183H368" />
              <g fill="#fff" stroke="#666" stroke-width="1">
                <path d="M172 165H181V170H172zM205 165H214V170H205zM238 165H247V170H238zM205 185H214V190H205zM238 185H247V190H238z" />
                <path stroke="#000" stroke-width="2" d="M172 185H181V190H172z" />
              </g>
            </svg>
            <div class="actions">
              <button class="default" type="submit">OK</button>
              <button type="button">Cancel</button>
              <button type="button">Pre<u>v</u>iew &lt;</button>
              <button type="button"><u>H</u>elp</button>
            </div>
          </div>
        </div>
      </form>

      <div class="command">
        <div class="handle">
          {@render icon('grip', 40, 42)}
          <button type="button" aria-label="Close command line">{@render icon('cmdClose', 36)}</button>
          <button type="button" aria-label="Customize">{@render icon('wrench', 38)}</button>
        </div>
        <div class="console">
          <div class="history">
            <div>Command: ARRAYCLASSIC</div>
            <div>Select objects: 1 found</div>
            <div>Select objects:</div>
          </div>
          <div class="entry">
            {@render icon('prompt')}
            {@render icon('caret', 24)}
            <input type="text" value="ARRAYCLASSIC" aria-label="Command" />
          </div>
        </div>
      </div>
    </section>
  </main>

  <nav class="layout-tabs">
    <button type="button" class="model-tab">Model</button>
    <button type="button">Layout1</button>
    <i class="slash"></i>
    <button type="button">Layout2</button>
    <i class="slash"></i>
    <button type="button" class="add" aria-label="New layout">{@render icon('plus')}</button>
    <i class="slash"></i>
  </nav>

  <footer class="status">
    <div class="filler"></div>
    <button type="button" class="cell text">MODEL</button>
    <div class="cell set">
      <button type="button" aria-label="Grid">{@render icon('gridOn')}</button>
      <button type="button" aria-label="Snap">{@render icon('snap')}</button>
      <button type="button" class="drop" aria-label="Snap settings">{@render icon('caret', 28)}</button>
    </div>
    <div class="cell set thin"><button type="button" aria-label="Infer constraints">{@render icon('infer')}</button></div>
    <div class="cell set thin"><button type="button" aria-label="Dynamic input">{@render icon('dynInput')}</button></div>
    <div class="cell set thin">
      <button type="button" aria-label="Ortho">{@render icon('ortho')}</button>
      <button type="button" aria-label="Polar tracking">{@render icon('polar')}</button>
      <button type="button" class="drop" aria-label="Polar settings">{@render icon('caret', 28)}</button>
      <button type="button" aria-label="Isometric drafting">{@render icon('isodraft')}</button>
      <button type="button" class="drop" aria-label="Isometric settings">{@render icon('caret', 28)}</button>
    </div>
    <div class="cell set thin">
      <button type="button" aria-label="Object snap tracking">{@render icon('otrack')}</button>
      <button type="button" class="on" aria-label="Object snap">{@render icon('osnap')}</button>
      <button type="button" class="drop" aria-label="Object snap settings">{@render icon('caret', 28)}</button>
    </div>
    <div class="cell set thin"><button type="button" aria-label="Lineweight">{@render icon('weight')}</button></div>
    <div class="cell set thin"><button type="button" aria-label="Transparency">{@render icon('transp')}</button></div>
    <div class="cell set thin"><button type="button" class="on" aria-label="Selection cycling">{@render icon('cycle')}</button></div>
    <div class="cell set">
      <button type="button" aria-label="3D object snap">{@render icon('snap3d')}</button>
      <button type="button" class="drop" aria-label="3D snap settings">{@render icon('caret', 28)}</button>
    </div>
    <div class="cell set"><button type="button" class="on" aria-label="Dynamic UCS">{@render icon('ucs')}</button></div>
    <div class="cell set last">
      <button type="button" class="on" aria-label="Annotation visibility">{@render icon('anno')}</button>
      <button type="button" aria-label="Annotation autoscale">{@render icon('annoAuto')}</button>
    </div>
  </footer>

  <footer class="taskbar">
    <button class="weather" type="button">
      <span class="weather-icon">{@render icon('weather', 60, 60)}<b>2</b></span>
      <span class="forecast"><span>19°C</span><span>Ger. Nublado</span></span>
    </button>
    <button class="start-button" type="button" aria-label="Start">{@render icon('windows', 60, 60)}</button>
    <label class="task-search">
      <svg width="38" height="38" viewBox="0 0 38 38" aria-hidden="true"><circle cx="16" cy="16" r="13" fill="none" stroke="#222" stroke-width="4" /><path stroke="#222" stroke-width="5" stroke-linecap="round" d="M26 27L34 35" /></svg>
      <input type="text" placeholder="Procurar" aria-label="Procurar" />
    </label>
    <div class="apps">
      {#each ['taskview', 'store', 'edge', 'copilot', 'explorer'] as name}
        <button type="button" aria-label={name}>{@render icon(name, 60, 60)}</button>
      {/each}
      <button type="button" aria-label="WhatsApp">{@render icon('whatsapp', 60, 60)}<b>4</b></button>
      {#each office as app}
        <button type="button" aria-label={app.name}>
          <svg class="icon" width="60" height="60" viewBox="0 0 60 60" aria-hidden="true">
            {#if app.name === 'PowerPoint'}
              <circle cx="33" cy="30" r="27" fill={app.tones[2]} />
              <path fill={app.tones[1]} d="M33 3A27 27 0 0 0 6 30H33z" />
              <path fill={app.tones[0]} d="M33 3A27 27 0 0 1 60 30H33z" />
            {:else if app.name === 'Word'}
              <path fill={app.tones[0]} d="M14 5Q14 3 16 3H58Q60 3 60 5V17H14z" />
              <path fill={app.tones[1]} d="M14 17H60V30H14z" />
              <path fill={app.tones[2]} d="M14 30H60V44H14z" />
              <path fill={app.tones[3]} d="M14 44H60V55Q60 57 58 57H16Q14 57 14 55z" />
            {:else if app.name === 'Excel'}
              <path fill={app.tones[3]} d="M14 3H60V57H14z" />
              <path fill={app.tones[1]} d="M14 3H37V30H14zM37 17H60V30H37z" />
              <path fill={app.tones[0]} d="M37 3H60V17H37z" />
              <path fill={app.tones[2]} d="M37 30H60V44H37z" />
            {:else}
              <path fill={app.tones[3]} d="M46 8H60V53H46z" />
              <path fill={app.tones[2]} d="M14 3H49V57H14z" />
              <path fill={app.tones[0]} d="M14 3H49V30H14z" />
              <path fill={app.tones[1]} d="M31 30H49V44H31z" />
            {/if}
            <rect x="1" y="15" width="31" height="30" rx="3" fill={app.tones[app.name === 'Excel' ? 2 : 3]} />
            <rect x="1" y="15" width="31" height="30" rx="3" fill={app.tones[2]} opacity=".5" />
            <text x="16" y="38" text-anchor="middle" font-family="'Open Sans', sans-serif" font-weight="700" font-size="22" fill="#fff">{app.letter}</text>
          </svg>
          {#if app.running}<i></i>{/if}
        </button>
      {/each}
      <button type="button" aria-label="Chrome">{@render icon('chrome', 60, 60)}</button>
      <button type="button" class="active" aria-label="AutoCAD">
        {@render cadLogo(60, '#e51050', '#f06a90', '#750829', 'A', 'CAD')}
        <i></i>
      </button>
      <button type="button" aria-label="3ds Max">{@render cadLogo(60, '#37a5cc', '#7cc6de', '#33677d', '3', 'MAX')}</button>
      <button type="button" aria-label="GIMP">{@render icon('gimp', 60, 60)}</button>
    </div>
  </footer>
</div>

<style>
  :global(body) {
    margin: 0;
    background: #222933;
  }

  .screen {
    display: flex;
    flex-direction: column;
    min-height: 100vh;
    overflow: hidden;
    font-family: "Noto Sans", "Open Sans", sans-serif;
    font-size: 28px;
    line-height: 38px;
    color: #f0f0f0;
    background: #222933;
  }

  button,
  input,
  select {
    margin: 0;
    padding: 0;
    border: none;
    border-radius: 0;
    background: none;
    font: inherit;
    color: inherit;
  }

  input {
    min-width: 0;
    outline: none;
  }

  .icon {
    display: block;
    flex: none;
    overflow: visible;
  }

  /* title bar */
  .titlebar {
    display: flex;
    height: 58px;
    white-space: nowrap;
  }

  .titlebar button {
    display: flex;
    align-items: center;
    height: 44px;
  }

  .brand {
    display: flex;
    align-items: center;
    flex: none;
    height: 40px;
    margin: 3px 24px 0 0;
    font-family: Roboto, sans-serif;
    font-weight: 700;
  }

  .brand b {
    width: 40px;
    border-left: 4px solid #f06a90;
    line-height: 40px;
    text-align: center;
    background: #e51050;
  }

  .brand span {
    width: 50px;
    font-size: 20px;
    line-height: 32px;
    text-align: center;
    background: #750829;
  }

  .quick {
    display: flex;
    gap: 20px;
  }

  .undo-more {
    margin: 0 29px 0 18px;
  }

  .share {
    gap: 14px;
    padding-top: 4px;
    color: #72c0ff;
  }

  .app-title {
    margin: 6px 0 0 131px;
    font-size: 28px;
    font-weight: 400;
    color: #fff;
  }

  .app-title span {
    margin-left: 32px;
  }

  .infocenter {
    display: flex;
    flex: 0 0 453px;
    gap: 13px;
    height: 47px;
    margin-left: auto;
  }

  .infocenter svg {
    margin-top: 13px;
  }

  .infocenter input {
    flex: 1;
    padding: 0 0 2px 5px;
    font-style: italic;
    background: #464f61;
  }

  input::placeholder {
    color: #b9bcc2;
    opacity: 1;
  }

  /* menus */
  .menubar {
    display: flex;
    align-items: center;
    gap: 38px;
    height: 47px;
    padding-left: 16px;
    border-bottom: 2px solid #323a47;
    color: #bfc1c5;
  }

  .ribbon-tabs {
    display: flex;
    height: 59px;
    align-items: flex-end;
    color: #c9cbce;
  }

  .ribbon-tabs button {
    height: 50px;
    padding: 0 25px;
    line-height: 54px;
    white-space: nowrap;
  }

  .ribbon-tabs .active {
    color: #fff;
    background: #3b4453;
  }

  .ribbon-tabs .minimize {
    display: flex;
    align-items: center;
    gap: 12px;
    margin-left: 35px;
  }

  /* ribbon */
  .ribbon {
    display: flex;
    height: 248px;
    overflow: hidden;
    background: #3b4453;
    color: #6f7682;
  }

  .panel {
    display: flex;
    flex: none;
    flex-direction: column;
    box-sizing: border-box;
    padding-top: 12px;
    border-right: 2px solid #272e39;
  }

  .draw { width: 552px; }
  .modify { width: 626px; }
  .annotation { width: 370px; }
  .layers { width: 683px; }
  .block { width: 201px; }
  .properties { width: 520px; }

  .tools {
    display: flex;
    height: 180px;
  }

  .panel-title {
    display: flex;
    align-items: center;
    justify-content: center;
    gap: 16px;
    height: 56px;
    padding-top: 8px;
    color: #fff;
  }

  .big {
    display: flex;
    flex-direction: column;
    align-items: center;
    flex: none;
    box-sizing: border-box;
    padding-top: 8px;
    line-height: 42px;
    background: #3c4252;
  }

  .big span {
    margin-top: 8px;
  }

  .arrow {
    color: #b9bcc2;
  }

  .big .arrow {
    margin-top: 5px;
  }

  .draw .big:nth-child(1) { width: 98px; }
  .draw .big:nth-child(2) { width: 116px; }
  .draw .big:nth-child(3) { width: 132px; }
  .draw .big:nth-child(4) { width: 95px; }
  .draw .stack { padding-left: 14px; }

  .stack {
    display: flex;
    flex-direction: column;
    padding-top: 3px;
  }

  .small {
    display: flex;
    align-items: center;
    height: 60px;
    gap: 14px;
    background: #3c4252;
  }

  .small .icon + .arrow {
    margin-left: 4px;
  }

  .small span + .arrow {
    margin-left: 11px;
  }

  .modify .tools {
    display: grid;
    grid-template-columns: 182px 171px 188px 44px;
    padding-left: 18px;
  }

  .modify .stack {
    align-items: flex-start;
  }

  .annotation .big:first-child { width: 120px; }
  .annotation .big:nth-child(2) { width: 142px; }
  .annotation .stack { padding-left: 21px; }

  .big .letter-a {
    height: 80px;
    margin: 0;
    font-family: Roboto, sans-serif;
    font-size: 100px;
    line-height: 80px;
  }

  .layers .big {
    width: 150px;
    margin-left: 4px;
  }

  .selected {
    border: 3px solid #5d94c4;
    padding-top: 6px;
    color: #7b8796;
    background: #43566c;
  }

  .wide {
    flex: 1;
    padding: 6px 6px 0 5px;
  }

  .combo {
    display: flex;
    align-items: center;
    box-sizing: border-box;
    height: 54px;
    border: 2px solid #2f3744;
    background: #485264;
  }

  .combo select {
    flex: 1;
    height: 50px;
    appearance: none;
    opacity: 1;
    color: #7d8593;
  }

  .layers .combo {
    padding: 0 3px 0 8px;
    margin-bottom: 2px;
  }

  .states {
    display: flex;
    gap: 10px;
    opacity: 0.6;
  }

  .swatch {
    width: 31px;
    height: 31px;
    margin: 0 11px 0 13px;
    border: 3px solid #8f949c;
    background: #2068b4;
  }

  .dim {
    margin-left: 15px;
    border-color: #68717f;
    background: #2b507f;
  }

  .flat {
    background: #3f4858;
  }

  .rule {
    width: 160px;
    height: 3px;
    margin: 0 6px 0 15px;
    background: #a4a9b1;
  }

  .line {
    display: flex;
    padding-left: 2px;
  }

  .line .small {
    width: 60px;
    padding-left: 5px;
    box-sizing: border-box;
  }

  .block .big {
    width: 106px;
  }

  .block .stack {
    padding-left: 8px;
  }

  .properties .big {
    width: 160px;
  }

  .prop {
    display: flex;
    align-items: center;
    gap: 6px;
    height: 60px;
    padding-left: 2px;
  }

  .prop .combo {
    width: 320px;
  }

  /* document tabs */
  .doc-tabs,
  .layout-tabs {
    display: flex;
    align-items: center;
    color: #e2e4e7;
  }

  .doc-tabs {
    height: 67px;
    align-items: flex-end;
  }

  .doc-tabs > * {
    height: 60px;
  }

  .doc-tabs button {
    padding-top: 2px;
  }

  .slash {
    flex: none;
    width: 18px;
    height: 40px;
    clip-path: polygon(15px 0, 18px 0, 3px 100%, 0 100%);
    background: #4a5362;
  }

  .doc-tabs .slash {
    height: 40px;
    margin: 0 0 9px 17px;
  }

  .start {
    margin-left: 20px;
  }

  .doc-tab {
    display: flex;
    align-items: center;
    gap: 20px;
    margin-left: 17px;
    padding: 0 26px 0 42px;
    font-weight: 700;
    color: #fff;
    background: #3b4453;
    clip-path: polygon(24px 0, 100% 0, calc(100% - 24px) 100%, 0 100%);
  }

  .doc-tabs .add {
    display: flex;
    align-items: center;
    margin: 0 0 0 18px;
  }

  /* workspace */
  .workspace {
    display: grid;
    flex: 1;
    grid-template-columns: 1012px minmax(0, 1fr);
    background: #3b4453;
  }

  .palette {
    display: flex;
    flex-direction: column;
    padding-top: 15px;
  }

  .palette h2 {
    margin: 0 10px 0 0;
    padding: 0 0 2px 32px;
    font-size: 28px;
    font-weight: 400;
    line-height: 53px;
    background: #2e3440;
  }

  .palette-head {
    display: flex;
    justify-content: space-between;
    height: 61px;
    margin-top: 16px;
    padding: 0 10px 0 5px;
  }

  .palette-head > span {
    padding-top: 10px;
  }

  .layer-search {
    display: flex;
    align-items: center;
    width: 312px;
    height: 40px;
    background: #4c586b;
  }

  .layer-search input {
    flex: 1;
    height: 40px;
    padding-top: 2px;
    box-sizing: border-box;
  }

  .palette-tools {
    display: flex;
    align-items: center;
    height: 40px;
    color: #dcdcdc;
  }

  .palette-tools > button:nth-child(2) {
    margin-left: 5px;
  }

  .palette-tools > i {
    width: 2px;
    height: 42px;
    margin: 0 7px 0 5px;
    background: #272e39;
  }

  .layer-actions {
    display: flex;
    gap: 7px;
    margin-left: 15px;
  }

  .right {
    display: flex;
    gap: 7px;
    margin-left: auto;
    padding-right: 57px;
  }

  .palette-body {
    display: flex;
    flex: 1;
    margin-top: 12px;
  }

  .rail {
    display: flex;
    flex-direction: column;
    justify-content: space-between;
    box-sizing: border-box;
    width: 59px;
    margin-right: 10px;
    padding: 5px 0 9px 14px;
    border: solid #2e3440;
    border-width: 3px 3px 3px 0;
  }

  .list {
    display: flex;
    flex: 1;
    flex-direction: column;
    margin-right: 12px;
    background: linear-gradient(#2e3440 0 0) 265px 0 / 4px 100% no-repeat;
  }

  table {
    width: 100%;
    table-layout: fixed;
    border-collapse: collapse;
  }

  .c-status { width: 44px; }
  .c-name { width: 225px; }
  .c-flag { width: 45px; }
  .c-color { width: 297px; }

  th {
    height: 58px;
    padding: 4px 0 0 9px;
    box-sizing: border-box;
    border-right: 3px solid #2e3440;
    text-align: left;
    font-weight: 400;
    white-space: nowrap;
    overflow: hidden;
    background: #464e61;
  }

  th:last-child {
    border-right: none;
  }

  .sorted {
    display: flex;
    align-items: center;
    justify-content: space-between;
    padding-right: 5px;
  }

  td {
    height: 45px;
    padding: 0 0 0 9px;
    line-height: 45px;
  }

  td:nth-child(2) {
    border-right: 4px solid #2e3440;
  }

  .mark {
    padding-left: 5px;
  }

  .current {
    background: #7386a3;
  }

  .color {
    display: flex;
    align-items: center;
    gap: 11px;
  }

  .color i {
    width: 26px;
    height: 26px;
    border: 2px solid #e6e6e6;
  }

  .scroll {
    height: 43px;
    margin-top: auto;
    padding-left: 43px;
    box-sizing: border-box;
    padding-top: 8px;
    background: #f0f0f0;
  }

  .scroll i {
    display: block;
    width: 287px;
    height: 28px;
    background: #858585;
  }

  .palette-foot {
    display: flex;
    align-items: center;
    height: 52px;
    margin: 0 15px 18px 0;
    padding-top: 37px;
    gap: 4px;
    border-bottom: 3px solid #2e3440;
  }

  .palette-foot span {
    margin: 0 0 3px 13px;
  }

  .drawing {
    position: relative;
    margin: 10px 0;
    overflow: hidden;
    background: #fff;
  }

  .model {
    position: absolute;
    left: 0;
    top: 0;
  }

  .view-label {
    position: relative;
    padding: 8px 5px;
    color: #111;
  }

  /* array dialog */
  .dialog {
    position: absolute;
    left: 257px;
    top: 78px;
    width: 1295px;
    border: 3px solid #b3b3b3;
    border-radius: 18px;
    font-family: "Liberation Sans", Arial, sans-serif;
    font-size: 27px;
    line-height: 31px;
    color: #000;
    background: #f0f0f0;
    box-shadow: 0 40px 90px rgba(0, 0, 0, 0.42), 0 0 60px rgba(0, 0, 0, 0.18);
  }

  .dialog-title {
    display: flex;
    align-items: center;
    gap: 8px;
    height: 67px;
    padding: 0 22px 0 15px;
    border-radius: 16px 16px 0 0;
    font-family: "Noto Sans", sans-serif;
    font-size: 28px;
    background: #f3f3f3;
  }

  .dialog-title button {
    margin-left: auto;
  }

  .dialog-body {
    display: flex;
    gap: 26px;
    padding: 17px 32px 30px 19px;
  }

  .left {
    width: 837px;
  }

  .modes {
    display: grid;
    grid-template-columns: 444px 1fr;
    height: 72px;
  }

  .modes label {
    display: flex;
    align-items: center;
    gap: 8px;
    height: 58px;
  }

  .modes input {
    box-sizing: border-box;
    width: 32px;
    height: 32px;
    border: 2px solid #808080;
    border-radius: 50%;
    appearance: none;
    background: #f5f5f5;
  }

  .modes input:checked {
    border: 10px solid #005fb8;
    background: #fff;
  }

  .dialog u {
    text-underline-offset: 3px;
    text-decoration-thickness: 2px;
  }

  .group {
    height: 652px;
    padding: 22px 26px 0 25px;
    border: solid #dedede;
    border-width: 0 2px 2px 2px;
  }

  .dialog input[type="text"] {
    box-sizing: border-box;
    width: 159px;
    height: 46px;
    padding: 0 0 6px 2px;
    border: 1px solid #e9e9e9;
    border-bottom: 2px solid #9a9a9a;
    background: #fff;
  }

  .counts {
    display: grid;
    grid-template-columns: 52px 136px 195px 52px 185px 159px;
    height: 91px;
    align-items: start;
  }

  .counts > :global(svg) {
    margin-top: 3px;
  }

  .counts label {
    padding-top: 6px;
  }

  fieldset {
    height: 471px;
    margin: 0;
    padding: 0 0 0 65px;
    border: 2px solid #e0e0e0;
  }

  legend {
    margin-left: -61px;
    padding: 0 4px;
  }

  .offsets {
    display: grid;
    grid-template-columns: 315px 159px 67px 64px;
    grid-auto-rows: 64px;
    gap: 9px 25px;
    align-items: start;
    margin-top: 38px;
  }

  .offsets label {
    padding-top: 12px;
  }

  .offsets button {
    display: flex;
    align-items: center;
    justify-content: center;
    width: 64px;
    height: 64px;
  }

  .offsets .both {
    grid-row: span 2;
    width: 72px;
    height: 130px;
  }

  .dialog-body button {
    box-sizing: border-box;
    border: 2px solid #d6d6d6;
    border-radius: 6px;
    background: #fdfdfd;
  }

  .focused {
    position: relative;
  }

  .dialog .focused input {
    border-bottom: 3px solid #0067c0;
  }

  .focused::before {
    content: "";
    position: absolute;
    left: 2px;
    top: 3px;
    width: 2px;
    height: 32px;
    background: #000;
  }

  .tip {
    display: flex;
    margin-top: 25px;
  }

  .tip-mark {
    display: flex;
    flex-direction: column;
    align-items: center;
    gap: 15px;
    width: 120px;
  }

  .tip p {
    width: 504px;
    margin: 5px 0 0 20px;
  }

  .side {
    flex: 1;
    display: flex;
    flex-direction: column;
  }

  .select {
    display: flex;
    gap: 24px;
    padding-left: 34px;
  }

  .select button {
    display: flex;
    align-items: flex-start;
    justify-content: center;
    width: 66px;
    height: 60px;
    padding-top: 6px;
  }

  .select label {
    padding-top: 7px;
  }

  .side p {
    margin: 14px 0 24px 2px;
  }

  .preview {
    display: block;
    box-sizing: border-box;
    width: 380px;
    height: 369px;
    border: solid #000;
    border-width: 2px 2px 3px 3px;
    background: #fff;
  }

  .actions {
    display: flex;
    flex-direction: column;
    align-self: flex-end;
    gap: 9px;
    width: 227px;
    margin-top: 32px;
  }

  .actions button {
    height: 53px;
  }

  .actions .default {
    border-color: #2b83cf;
  }

  /* command line */
  .command {
    position: absolute;
    left: 409px;
    right: 0;
    bottom: 1px;
    display: flex;
    height: 178px;
    border-radius: 8px 0 0 8px;
    overflow: hidden;
    font-family: "DejaVu Sans Mono", monospace;
    font-size: 30px;
    color: #222;
  }

  .handle {
    display: flex;
    flex-direction: column;
    align-items: center;
    width: 61px;
    padding-right: 1px;
    box-sizing: border-box;
    background: rgba(70, 76, 89, 0.93);
  }

  .handle button {
    margin-bottom: 23px;
  }

  .console {
    flex: 1;
    border: solid #50565f;
    border-width: 3px 0;
  }

  .history {
    height: 121px;
    padding: 2px 5px 0;
    box-sizing: border-box;
    border-bottom: 3px solid #50565f;
    background: rgba(205, 205, 205, 0.88);
  }

  .entry {
    display: flex;
    align-items: center;
    height: 51px;
    padding-left: 11px;
    gap: 3px;
    color: #888;
    background: rgba(255, 255, 255, 0.85);
  }

  .entry input {
    flex: 1;
    margin-left: 10px;
    font-weight: 700;
    color: #222;
  }

  /* layout tabs */
  .layout-tabs {
    height: 75px;
    padding-left: 15px;
    align-items: flex-start;
  }

  .layout-tabs button {
    height: 60px;
    padding-top: 2px;
  }

  .layout-tabs .slash {
    margin: 10px 18px 0 24px;
  }

  .layout-tabs .model-tab {
    margin-right: 18px;
    padding: 2px 44px 0 42px;
    font-weight: 700;
    color: #fff;
    background: #3b4453;
    clip-path: polygon(24px 0, 100% 0, calc(100% - 24px) 100%, 0 100%);
  }

  /* status bar */
  .status {
    display: flex;
    height: 59px;
    color: #dcdcdc;
  }

  .filler {
    flex: 1;
    margin-right: 9px;
    background: #3b4453;
  }

  .cell {
    flex: none;
    margin-right: 6px;
    background: #3b4453;
  }

  .text {
    width: 120px;
    color: #fff;
  }

  .set {
    display: flex;
    align-items: center;
  }

  .thin {
    margin-right: 2px;
  }

  .set button {
    display: flex;
    align-items: center;
    justify-content: center;
    width: 60px;
    height: 54px;
  }

  .set .drop {
    width: 41px;
  }

  .set .on {
    width: 56px;
    margin: 0 2px;
    color: #fff;
    background: #5f8fc3;
  }

  .last {
    margin-right: -11px;
  }

  /* taskbar */
  .taskbar {
    position: relative;
    display: flex;
    align-items: center;
    box-sizing: border-box;
    height: 109px;
    padding-top: 7px;
    border-top: 3px solid #b0b0b0;
    color: #1a1a1a;
    background: linear-gradient(90deg, #dedede, #e6e6e6 40%, #e2e2e2);
  }

  .weather {
    display: flex;
    align-items: center;
    gap: 19px;
    flex: none;
    width: 608px;
    padding-left: 46px;
    text-align: left;
  }

  .weather-icon {
    position: relative;
  }

  .taskbar b {
    position: absolute;
    left: 28px;
    top: -14px;
    width: 41px;
    height: 41px;
    border-radius: 50%;
    font-weight: 400;
    line-height: 41px;
    text-align: center;
    color: #fff;
    background: #c42b1c;
  }

  .forecast {
    display: flex;
    flex-direction: column;
  }

  .forecast span + span {
    color: #666;
  }

  .start-button {
    margin: 0 34px 0 47px;
  }

  .task-search {
    display: flex;
    align-items: center;
    gap: 24px;
    box-sizing: border-box;
    width: 546px;
    height: 79px;
    padding-left: 25px;
    border: 3px solid #cdcdcd;
    border-radius: 40px;
    font-size: 32px;
    background: #f5f5f5;
  }

  .task-search input {
    flex: 1;
  }

  .task-search input::placeholder {
    color: #5c5c5c;
  }

  .apps {
    display: flex;
    gap: 16px;
    margin-left: 15px;
  }

  .apps button {
    position: relative;
    display: flex;
    flex: none;
    align-items: center;
    justify-content: center;
    width: 94px;
    height: 96px;
    border-radius: 10px;
  }

  .apps .active {
    background: #f2f2f2;
  }

  .apps b {
    left: 50px;
    top: 7px;
    background: #0078d7;
  }

  .apps i {
    position: absolute;
    bottom: 1px;
    width: 15px;
    height: 8px;
    border-radius: 4px;
    background: #7c7c7c;
  }

  .apps .active i {
    width: 40px;
    background: #0078d7;
  }
</style>
